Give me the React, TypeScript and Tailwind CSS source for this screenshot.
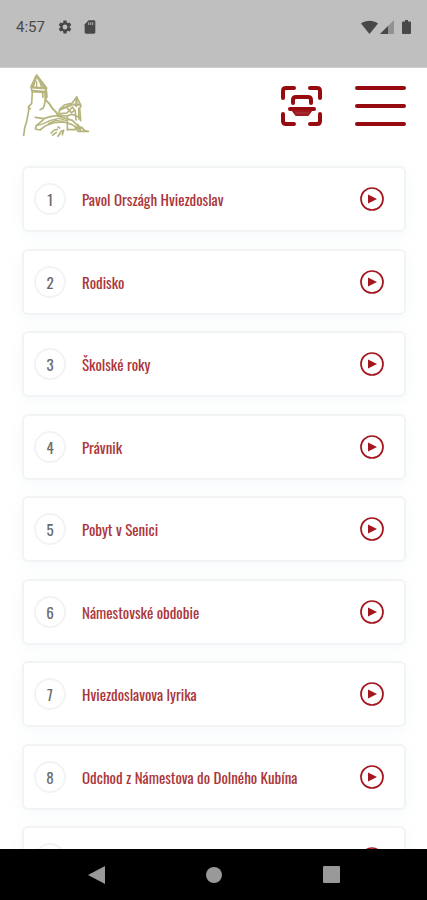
import { MdSettings } from "react-icons/md";

type Track = {
  id: number;
  title: string;
};

const tracks: Track[] = [
  { id: 1, title: "Pavol Országh Hviezdoslav" },
  { id: 2, title: "Rodisko" },
  { id: 3, title: "Školské roky" },
  { id: 4, title: "Právnik" },
  { id: 5, title: "Pobyt v Senici" },
  { id: 6, title: "Námestovské obdobie" },
  { id: 7, title: "Hviezdoslavova lyrika" },
  { id: 8, title: "Odchod z Námestova do Dolného Kubína" },
];

function StatusBar() {
  return (
    <div className="flex h-[68px] shrink-0 items-start justify-between border-b border-[#d0d0d0] bg-[#bfbfbf] px-4 pt-[17px] text-[#484848]">
      <div className="flex h-5 items-center">
        <span className="w-[41px] font-['Roboto',sans-serif] text-[15px] leading-5">4:57</span>
        <MdSettings className="size-4" aria-hidden="true" />
        <svg className="ml-[9px] size-4" viewBox="0 0 24 24" aria-hidden="true">
          <path d="M10 2h8a2 2 0 0 1 2 2v16a2 2 0 0 1-2 2H6a2 2 0 0 1-2-2V8z" fill="currentColor" />
          <path d="M9 5h2v4H9zm3 0h2v4h-2zm3 0h2v4h-2z" fill="#9a9a9a" />
        </svg>
      </div>
      <div className="flex h-5 items-center">
        <svg className="h-[14px] w-[17px]" viewBox="0 0 17 14" fill="currentColor" aria-hidden="true">
          <path d="M0 3.500C5-.2 12-.2 17 3.500L8.500 14z" />
        </svg>
        <svg className="ml-0.5 size-[14px]" viewBox="0 0 14 14" aria-hidden="true">
          <path d="M14 0v14H0z" fill="#929292" />
          <path d="M8 6v8H0z" fill="currentColor" />
        </svg>
        <svg className="ml-2 h-[14px] w-[9px]" viewBox="0 0 9 14" fill="currentColor" aria-hidden="true">
          <path d="M3 0h3v1.500h2a1 1 0 0 1 1 1V13a1 1 0 0 1-1 1H1a1 1 0 0 1-1-1V2.500a1 1 0 0 1 1-1h2z" />
        </svg>
      </div>
    </div>
  );
}

function CastleLogo() {
  return (
    <svg
      className="h-[67px] w-[73px]"
      viewBox="30 20 219 201"
      fill="none"
      stroke="#b5b47d"
      strokeWidth="5"
      strokeLinecap="round"
      strokeLinejoin="round"
      aria-hidden="true"
    >
      <path d="M80 29 63 64l3 14 39 2 5-12z" />
      <path d="M78 34 69 63M83 36l19 29M65 66l43 3M67 77l37 3" strokeWidth="7" />
      <path d="M80 48v16M90 50l4 16" strokeWidth="4" />
      <path d="M67 80l-2 34-9 10v12l-6 32-6 20-3 22M55 126l6 4" />
      <path d="M105 79l1 22-3 19-4 9-9 4M98 84l1 12M109 74l2 21-5 7" />
      <path d="M106 103l12 12 9 14 10 10 8 11" strokeWidth="6" />
      <path d="M145 150l4-18 14-13 24-6 13-18 13 26-4 9 3 36" />
      <path d="M200 97l-1 25M192 118h17M151 132l18-7 16-7" strokeWidth="7" />
      <path d="M151 145l20-2 16-18 9 12M172 129l12 13 8-5M146 150l25 2 15-5 25 10M172 154v40M196 140l2 24M206 128l1 34" />
      <path d="M76 156l25 4 20-6 20-3 25 8 21 6 26 25" />
      <path d="M101 162l-14 12-8 6-3 11 14 3 17-13 24-9 31-2 23 7 21 14" />
      <path d="M83 180l18-5 18-9 27-7 23 7M115 174l23-9 21 3" strokeWidth="4" />
      <path d="M123 203l10-9 9-2M128 209l11-8M144 213l10-15 7-3-4 13M144 185l5 3" />
      <path d="M173 193h22l7-9 13 2 9 10 11 2h-31l-8-10M204 178l7 17" />
    </svg>
  );
}

function ScanIcon() {
  return (
    <svg className="h-10 w-[42px]" viewBox="0 0 42 40" fill="none" stroke="#950b10" strokeWidth="4" strokeLinecap="round" strokeLinejoin="round" aria-hidden="true">
      <path d="M2 12V5q0-3 3-3h8M29 2h7q3 0 3 3v7M39 28v7q0 3-3 3h-7M13 38H5q-3 0-3-3v-7" />
      <path d="M12 17v-3q0-3 3-3h12q3 0 3 3v3" />
      <path d="M9 23h24" />
      <path d="M12 25h18l-3 4H15z" fill="#a52a2f" stroke="#9d1b20" strokeWidth="2" />
    </svg>
  );
}

function Header() {
  return (
    <header className="flex h-[81px] shrink-0 items-start justify-between pr-[21px] pl-5">
      <a href="#home" aria-label="Domov" className="pt-1">
        <CastleLogo />
      </a>
      <div className="flex items-start gap-8 pt-[18px]">
        <button type="button" aria-label="Skenovať">
          <ScanIcon />
        </button>
        <button type="button" aria-label="Menu" className="flex h-10 w-[51px] flex-col justify-between">
          <span className="h-1 w-full rounded-full bg-[#950b10]" />
          <span className="h-1 w-full rounded-full bg-[#950b10]" />
          <span className="h-1 w-full rounded-full bg-[#950b10]" />
        </button>
      </div>
    </header>
  );
}

function TrackCard({ track }: { track?: Track }) {
  return (
    <li className="flex h-[66px] items-center rounded-md border-2 border-[#f1f3f4] bg-white pr-5 pl-[10px] shadow-[0_3px_14px_rgba(110,160,190,0.08)] odd:mb-[17px] even:mb-4">
      <span className="flex size-8 shrink-0 items-center justify-center rounded-full border-2 border-[#f3f3f3] font-['Oswald',sans-serif] text-[15px] leading-6 text-[#6b6b6b]">
        {track?.id}
      </span>
      <span className="ml-4 flex-1 font-['Oswald',sans-serif] text-[15px] leading-6 text-[#ab353a]">
        {track?.title}
      </span>
      <button type="button" aria-label="Prehrať">
        <svg className="size-6" viewBox="0 0 24 24" aria-hidden="true">
          <circle cx="12" cy="12" r="11" fill="none" stroke="#a3161d" strokeWidth="1.700" />
          <path d="M8 7.500v9l9-4.500z" fill="#a3161d" />
        </svg>
      </button>
    </li>
  );
}

function NavigationBar() {
  return (
    <nav className="flex h-[51px] shrink-0 items-center justify-center gap-[101px] bg-black text-[#999999]">
      <button type="button" aria-label="Späť">
        <svg className="h-[18px] w-[17px]" viewBox="0 0 17 18" fill="currentColor" aria-hidden="true">
          <path d="M17 0v18L0 9z" />
        </svg>
      </button>
      <button type="button" aria-label="Domovská obrazovka" className="size-4 rounded-full bg-current" />
      <button type="button" aria-label="Prehľad" className="size-[17px] rounded-[1px] bg-current" />
    </nav>
  );
}

export default function App() {
  return (
    <div className="flex h-screen flex-col overflow-hidden bg-white">
      <StatusBar />
      <Header />
      <main className="min-h-0 flex-1 overflow-hidden pt-[17px] pr-[21px] pl-[22px]">
        <ol>
          {tracks.map((track) => (
            <TrackCard key={track.id} track={track} />
          ))}
          {/* next entry, still loading */}
          <TrackCard />
        </ol>
      </main>
      <NavigationBar />
    </div>
  );
}
